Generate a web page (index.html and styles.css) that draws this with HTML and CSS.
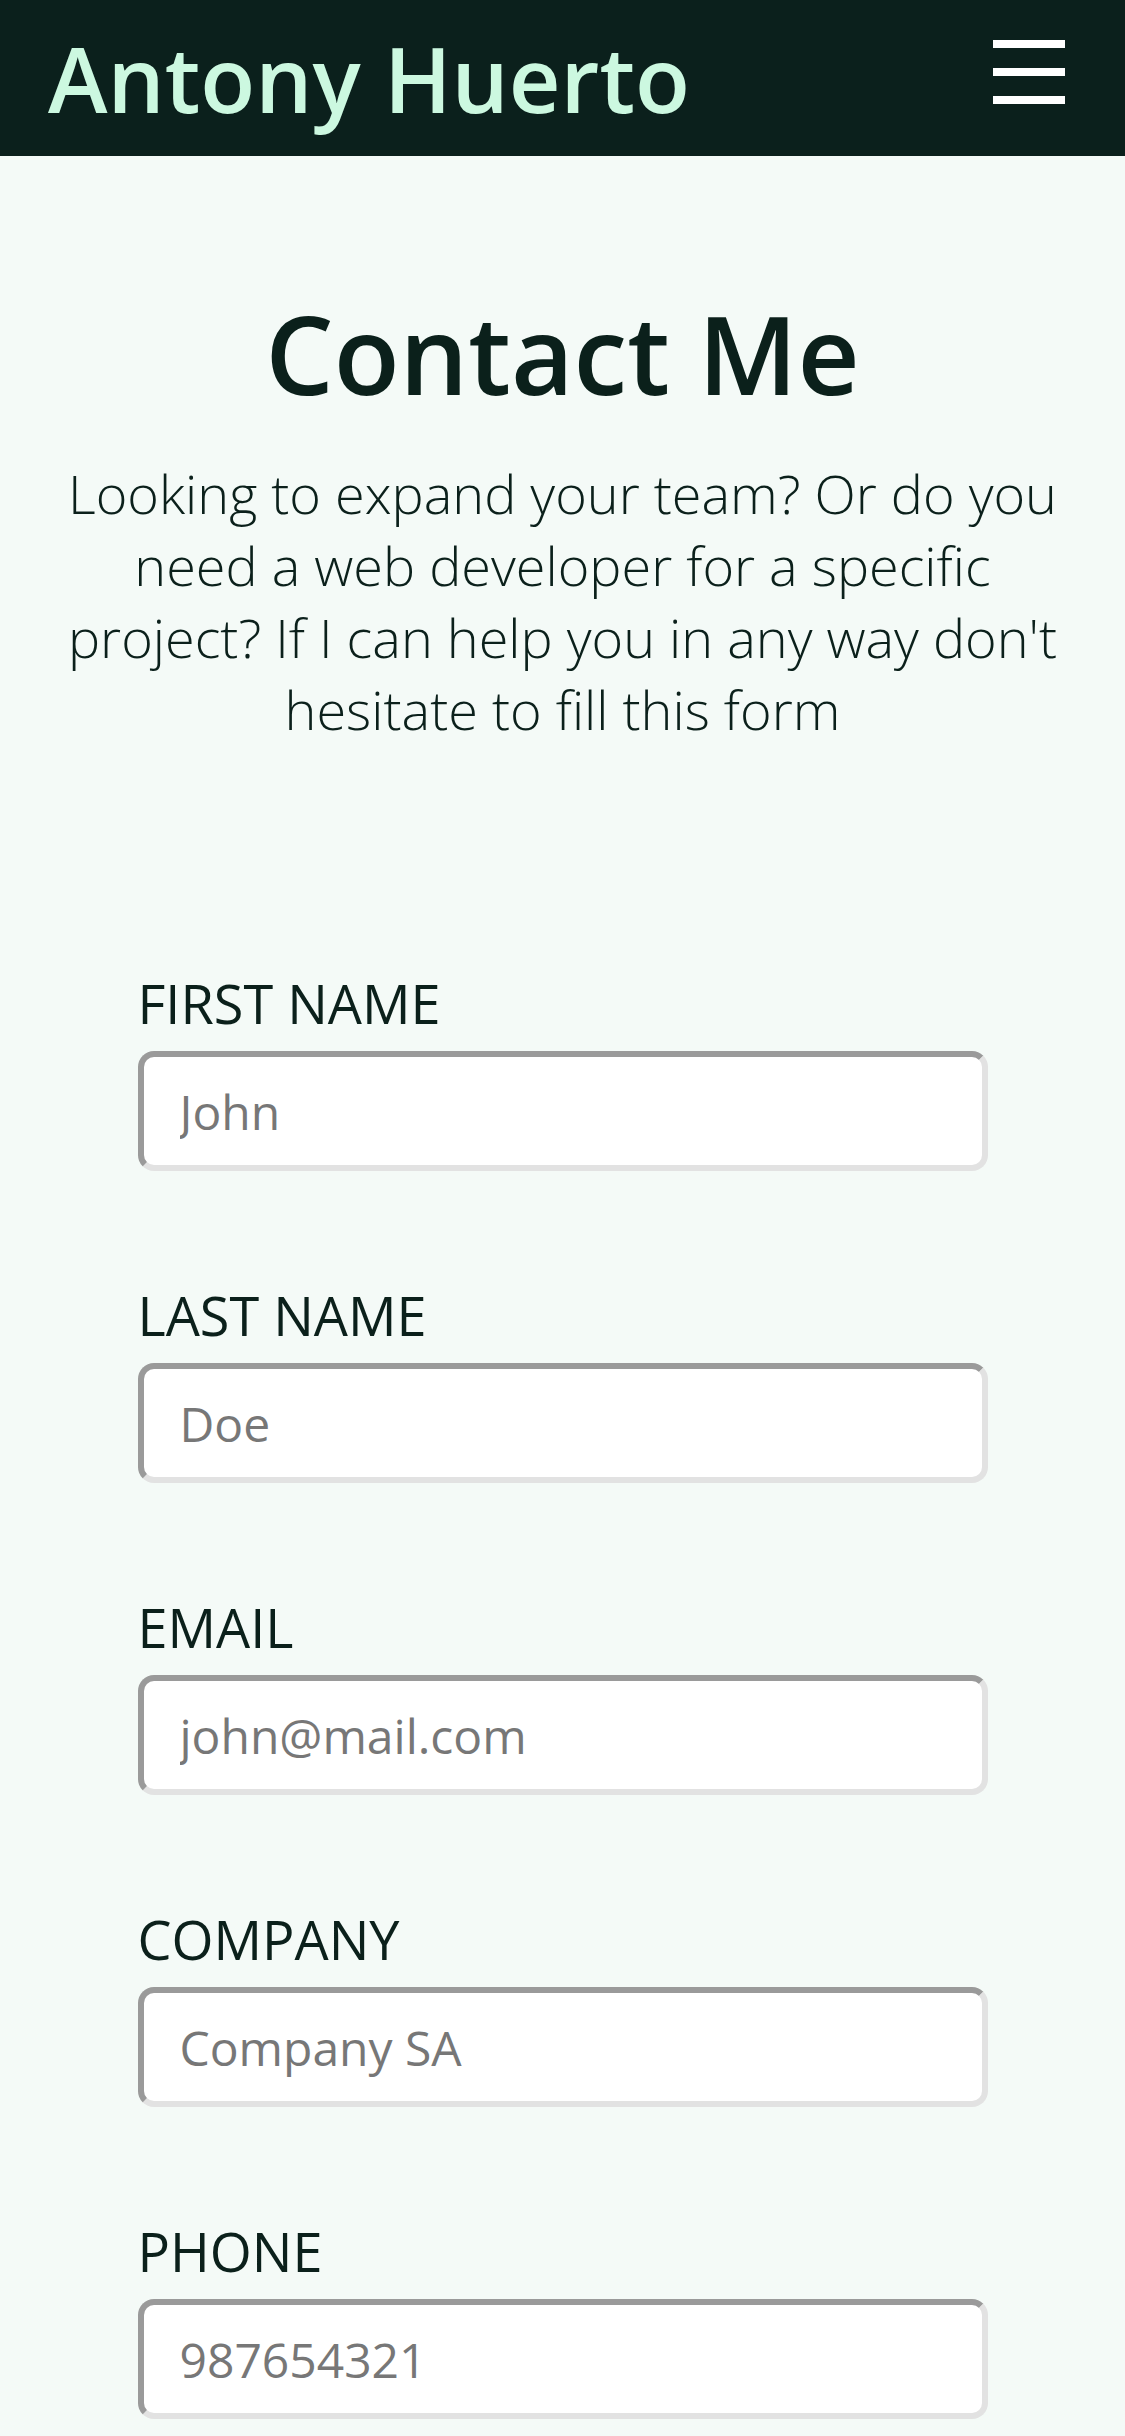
FILE: index.html
```html
<!DOCTYPE html>
<html lang="en">
<head>
<meta charset="utf-8">
<title>Antony Huerto - Contact</title>
<link rel="stylesheet" href="styles.css">
</head>
<body>
<header class="topbar">
  <span class="brand">Antony Huerto</span>
  <button class="menu" aria-label="Menu">
    <span class="bar"></span>
    <span class="bar"></span>
    <span class="bar"></span>
  </button>
</header>
<main class="content">
  <h1 class="title">Contact Me</h1>
  <p class="intro">Looking to expand your team? Or do you need a web developer for a specific project? If I can help you in any way don't hesitate to fill this form</p>
  <form class="form">
    <div class="field">
      <label class="label" for="first">FIRST NAME</label>
      <input class="input" id="first" type="text" placeholder="John">
    </div>
    <div class="field">
      <label class="label" for="last">LAST NAME</label>
      <input class="input" id="last" type="text" placeholder="Doe">
    </div>
    <div class="field">
      <label class="label" for="email">EMAIL</label>
      <input class="input" id="email" type="email" placeholder="john@mail.com">
    </div>
    <div class="field">
      <label class="label" for="company">COMPANY</label>
      <input class="input" id="company" type="text" placeholder="Company SA">
    </div>
    <div class="field">
      <label class="label" for="phone">PHONE</label>
      <input class="input" id="phone" type="tel" placeholder="987654321">
    </div>
  </form>
</main>
</body>
</html>
```
FILE: styles.css
```css
* { box-sizing: border-box; }
html, body {
  margin: 0;
  padding: 0;
  background: #f4faf7;
  color: #0b201b;
  font-family: "Open Sans", "Noto Sans", sans-serif;
}
.topbar {
  height: 156px;
  background: #0b201c;
  display: flex;
  align-items: center;
  justify-content: space-between;
  padding: 0 60px 0 48px;
}
.brand {
  color: #ccf8e0;
  font-size: 90px;
  font-weight: 600;
  line-height: 90px;
}
.menu {
  background: none;
  border: 0;
  padding: 0;
  width: 72px;
  display: flex;
  flex-direction: column;
  gap: 20px;
  margin-bottom: 12px;
}
.bar {
  display: block;
  width: 72px;
  height: 8px;
  background: #ffffff;
}
.content {
  padding: 0 48px 40px;
}
.title {
  margin: 124px 0 30px;
  text-align: center;
  font-size: 108px;
  font-weight: 600;
  line-height: 147px;
}
.intro {
  margin: 0;
  text-align: center;
  font-size: 54px;
  font-weight: 300;
  line-height: 72px;
}
.form {
  width: 850px;
  margin: 218px auto 0;
  display: flex;
  flex-direction: column;
  gap: 104px;
}
.field {
  display: flex;
  flex-direction: column;
  gap: 7px;
}
.label {
  font-size: 54px;
  font-weight: 400;
  line-height: 81px;
}
.input {
  width: 850px;
  height: 120px;
  border: 6px solid;
  border-color: #9a9a9a #e2e2e2 #e2e2e2 #9a9a9a;
  border-radius: 16px;
  background: #ffffff;
  padding: 0 36px;
  font-family: "Open Sans", "Noto Sans", sans-serif;
  font-size: 48px;
  color: #0b201b;
}
.input::placeholder {
  color: #777777;
  opacity: 1;
}
```
